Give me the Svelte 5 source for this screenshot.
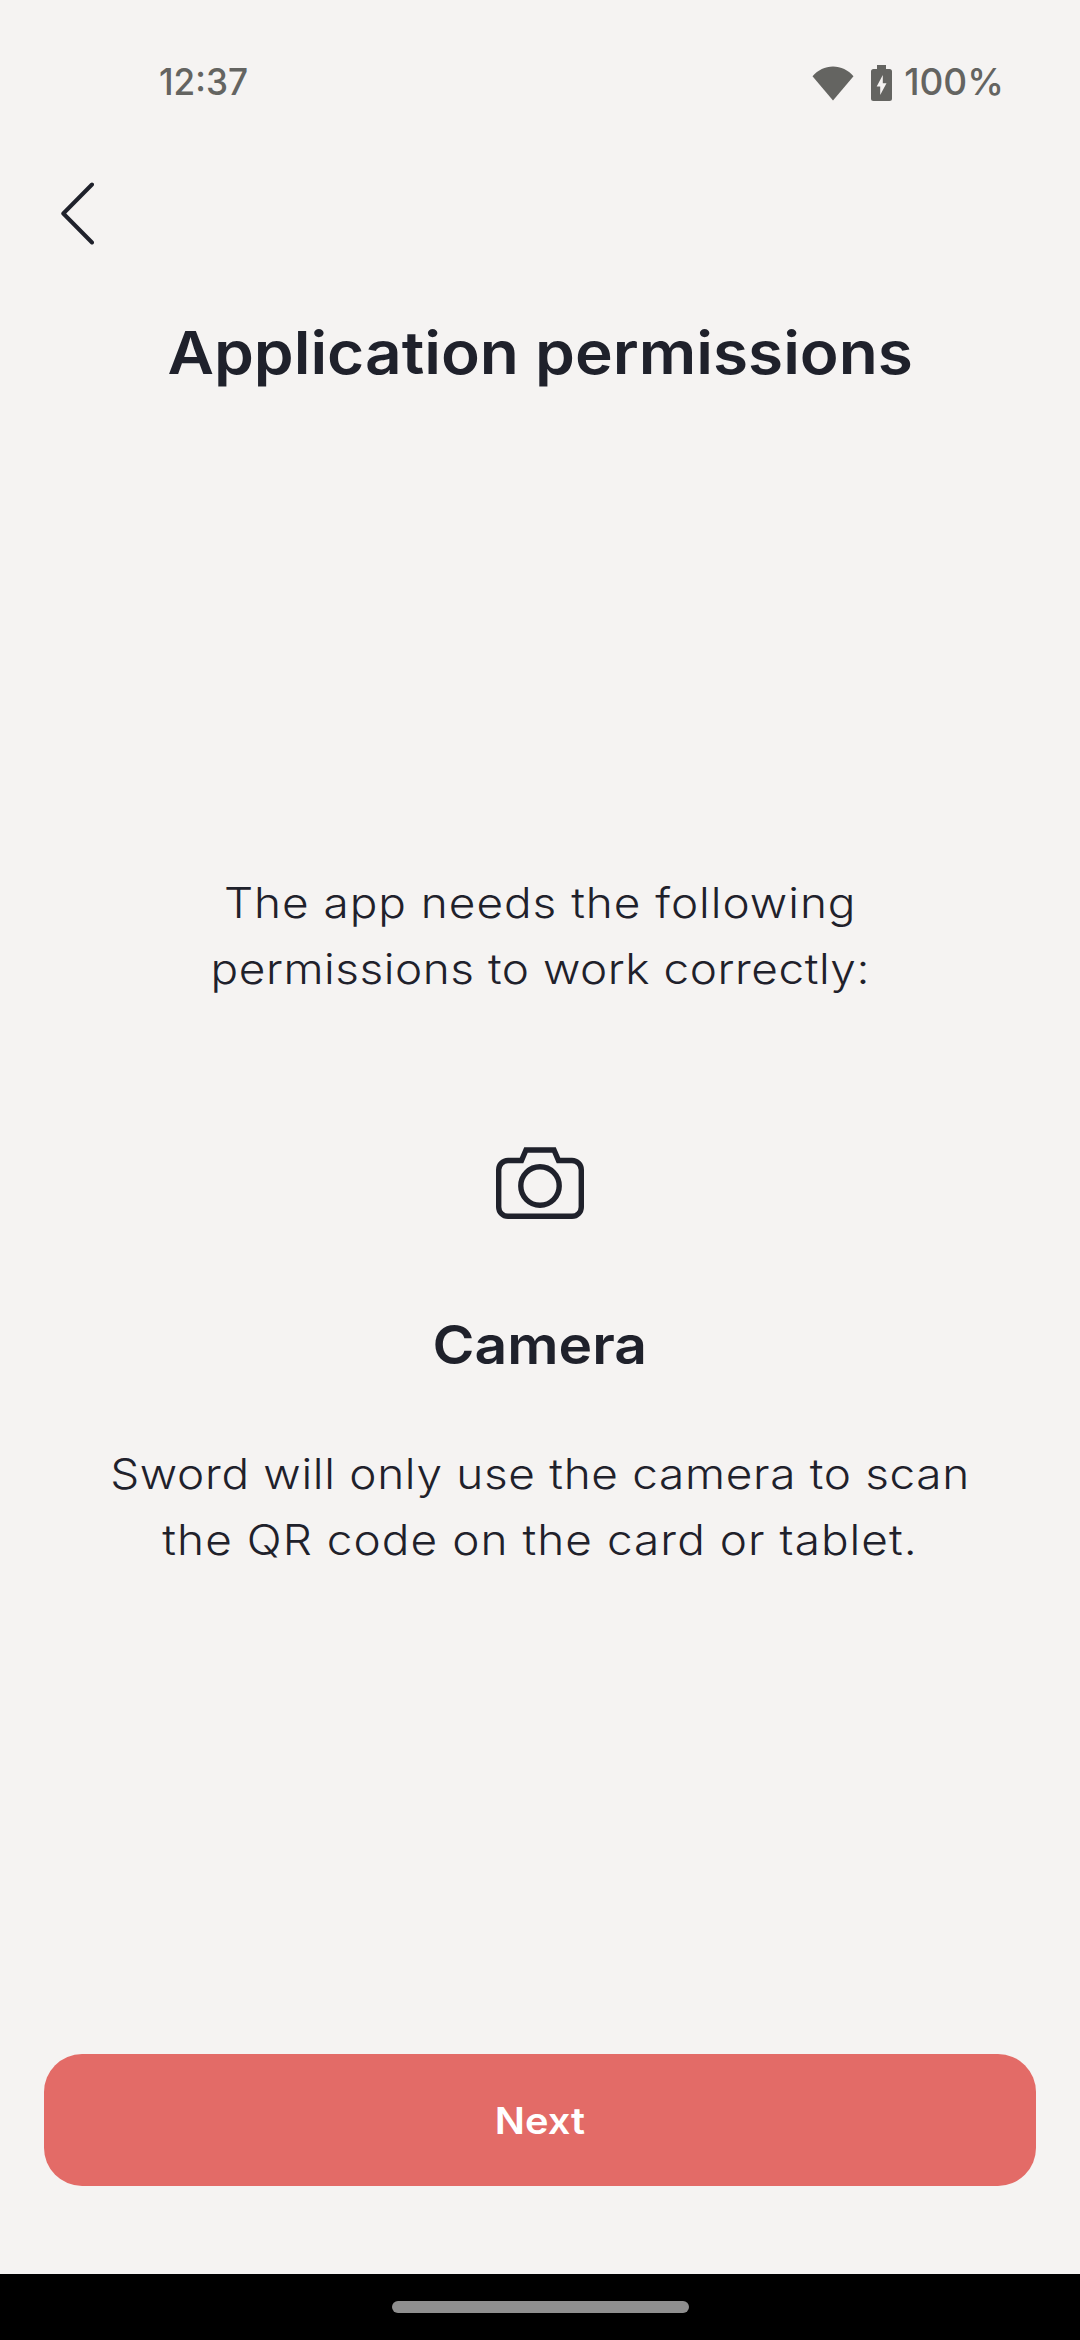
<script lang="ts">
  const intro = [
    { text: 'The app needs the following', fit: 'wide' },
    { text: 'permissions to work correctly:', fit: 'snug' },
  ];
  const details = [
    { text: 'Sword will only use the camera to scan', fit: 'medium' },
    { text: 'the QR code on the card or tablet.', fit: 'wider' },
  ];
</script>

<div class="screen">
  <header class="status">
    <span class="clock">12:37</span>
    <div class="indicators">
      <svg class="wifi" viewBox="0 0 42 35" width="42" height="35" aria-hidden="true">
        <path d="M.5 10.2C6 4 13 .5 21 .5s15 3.500 20.500 9.700L21 34.500Z" fill="#646461" />
      </svg>
      <svg class="battery" viewBox="0 0 21 36" width="21" height="36" aria-hidden="true">
        <path d="M6 0h9v4h3.500a2.500 2.500 0 0 1 2.500 2.500v27a2.500 2.500 0 0 1-2.500 2.500h-16A2.500 2.500 0 0 1 0 33.500v-27A2.500 2.500 0 0 1 2.500 4H6Z" fill="#646461" />
        <path d="M11.800 10v8.200h3.700L9.200 30v-8.500H5.700Z" fill="#f5f3f2" />
      </svg>
      <span class="charge">100%</span>
    </div>
  </header>

  <nav class="toolbar">
    <button class="back" aria-label="Back">
      <svg viewBox="0 0 34 64" width="34" height="64">
        <path d="M32 3.500 3.300 32.500 32 61.500" fill="none" stroke="#1f212b" stroke-width="4" stroke-linecap="round" stroke-linejoin="round" />
      </svg>
    </button>
  </nav>

  <h1><span class="stretch">Application permissions</span></h1>

  <main>
    <p class="intro">
      {#each intro as line}<span class="line {line.fit}">{line.text}</span>{/each}
    </p>
    <svg class="camera" viewBox="0 0 88 72" width="88" height="72" aria-hidden="true">
      <g fill="none" stroke="#1f212b" stroke-width="5.400">
        <path d="M12 13.500H25.500L30 3H58L62.500 13.500H76A9.300 9.300 0 0 1 85.300 22.800V60A9.300 9.300 0 0 1 76 69.300H12A9.300 9.300 0 0 1 2.700 60V22.800A9.300 9.300 0 0 1 12 13.500Z" />
        <circle cx="44" cy="39" r="19.200" />
      </g>
    </svg>
    <h2><span class="stretch">Camera</span></h2>
    <p class="details">
      {#each details as line}<span class="line {line.fit}">{line.text}</span>{/each}
    </p>
  </main>

  <footer><button class="next"><span class="stretch">Next</span></button></footer>
  <div class="system"><div class="handle"></div></div>
</div>

<style>
  :global(body) { background: #f5f3f2; }
  .screen {
    width: 1080px;
    height: 2340px;
    display: flex;
    flex-direction: column;
    background: #f5f3f2;
    color: #1f212b;
    font-family: Inter, sans-serif;
    overflow: hidden;
  }
  button { border: 0; padding: 0; background: none; font: inherit; color: inherit; }
  h1, h2, p { margin: 0; text-align: center; white-space: nowrap; }
  .stretch { display: inline-block; transform: scaleX(1.075); }
  .status {
    height: 166px;
    flex: none;
    box-sizing: border-box;
    padding: 0 76px 0 159px;
    display: flex;
    justify-content: space-between;
    align-items: center;
    color: #646461;
    font-size: 37px;
    font-weight: 500;
  }
  .clock, .charge { line-height: 44px; padding-bottom: 2px; }
  .clock { transform: scaleX(0.95); transform-origin: left; }
  .indicators { display: flex; align-items: center; }
  .battery { margin: 0 12px 0 17px; }
  .toolbar { height: 134px; flex: none; padding-left: 60px; }
  .back { display: block; padding-top: 15px; }
  .back svg { display: block; }
  h1 { font-size: 59px; line-height: 72px; font-weight: 600; padding-top: 17px; }
  h1 .stretch { transform: scaleX(1.083); }
  main { flex: 1; display: flex; flex-direction: column; align-items: center; padding-top: 481px; }
  p { font-size: 42.500px; line-height: 66px; font-weight: 300; }
  .line { display: block; transform: scaleX(1.08); }
  .snug { letter-spacing: 0.5px; }
  .medium { letter-spacing: 0.64px; }
  .wide { letter-spacing: 0.9px; }
  .wider { letter-spacing: 0.98px; }
  .camera { margin-top: 145px; flex: none; }
  h2 { font-size: 53px; line-height: 64px; font-weight: 600; margin-top: 94px; }
  .details { margin-top: 64px; }
  footer { height: 220px; flex: none; padding: 0 44px; }
  .next {
    display: block;
    width: 100%;
    height: 132px;
    border-radius: 38px;
    background: #e36b67;
    color: #fff;
    font-size: 37px;
    font-weight: 600;
  }
  .system { height: 66px; flex: none; background: #000; display: flex; align-items: center; justify-content: center; }
  .handle { width: 297px; height: 12px; border-radius: 6px; background: #8f8f8f; }
</style>
